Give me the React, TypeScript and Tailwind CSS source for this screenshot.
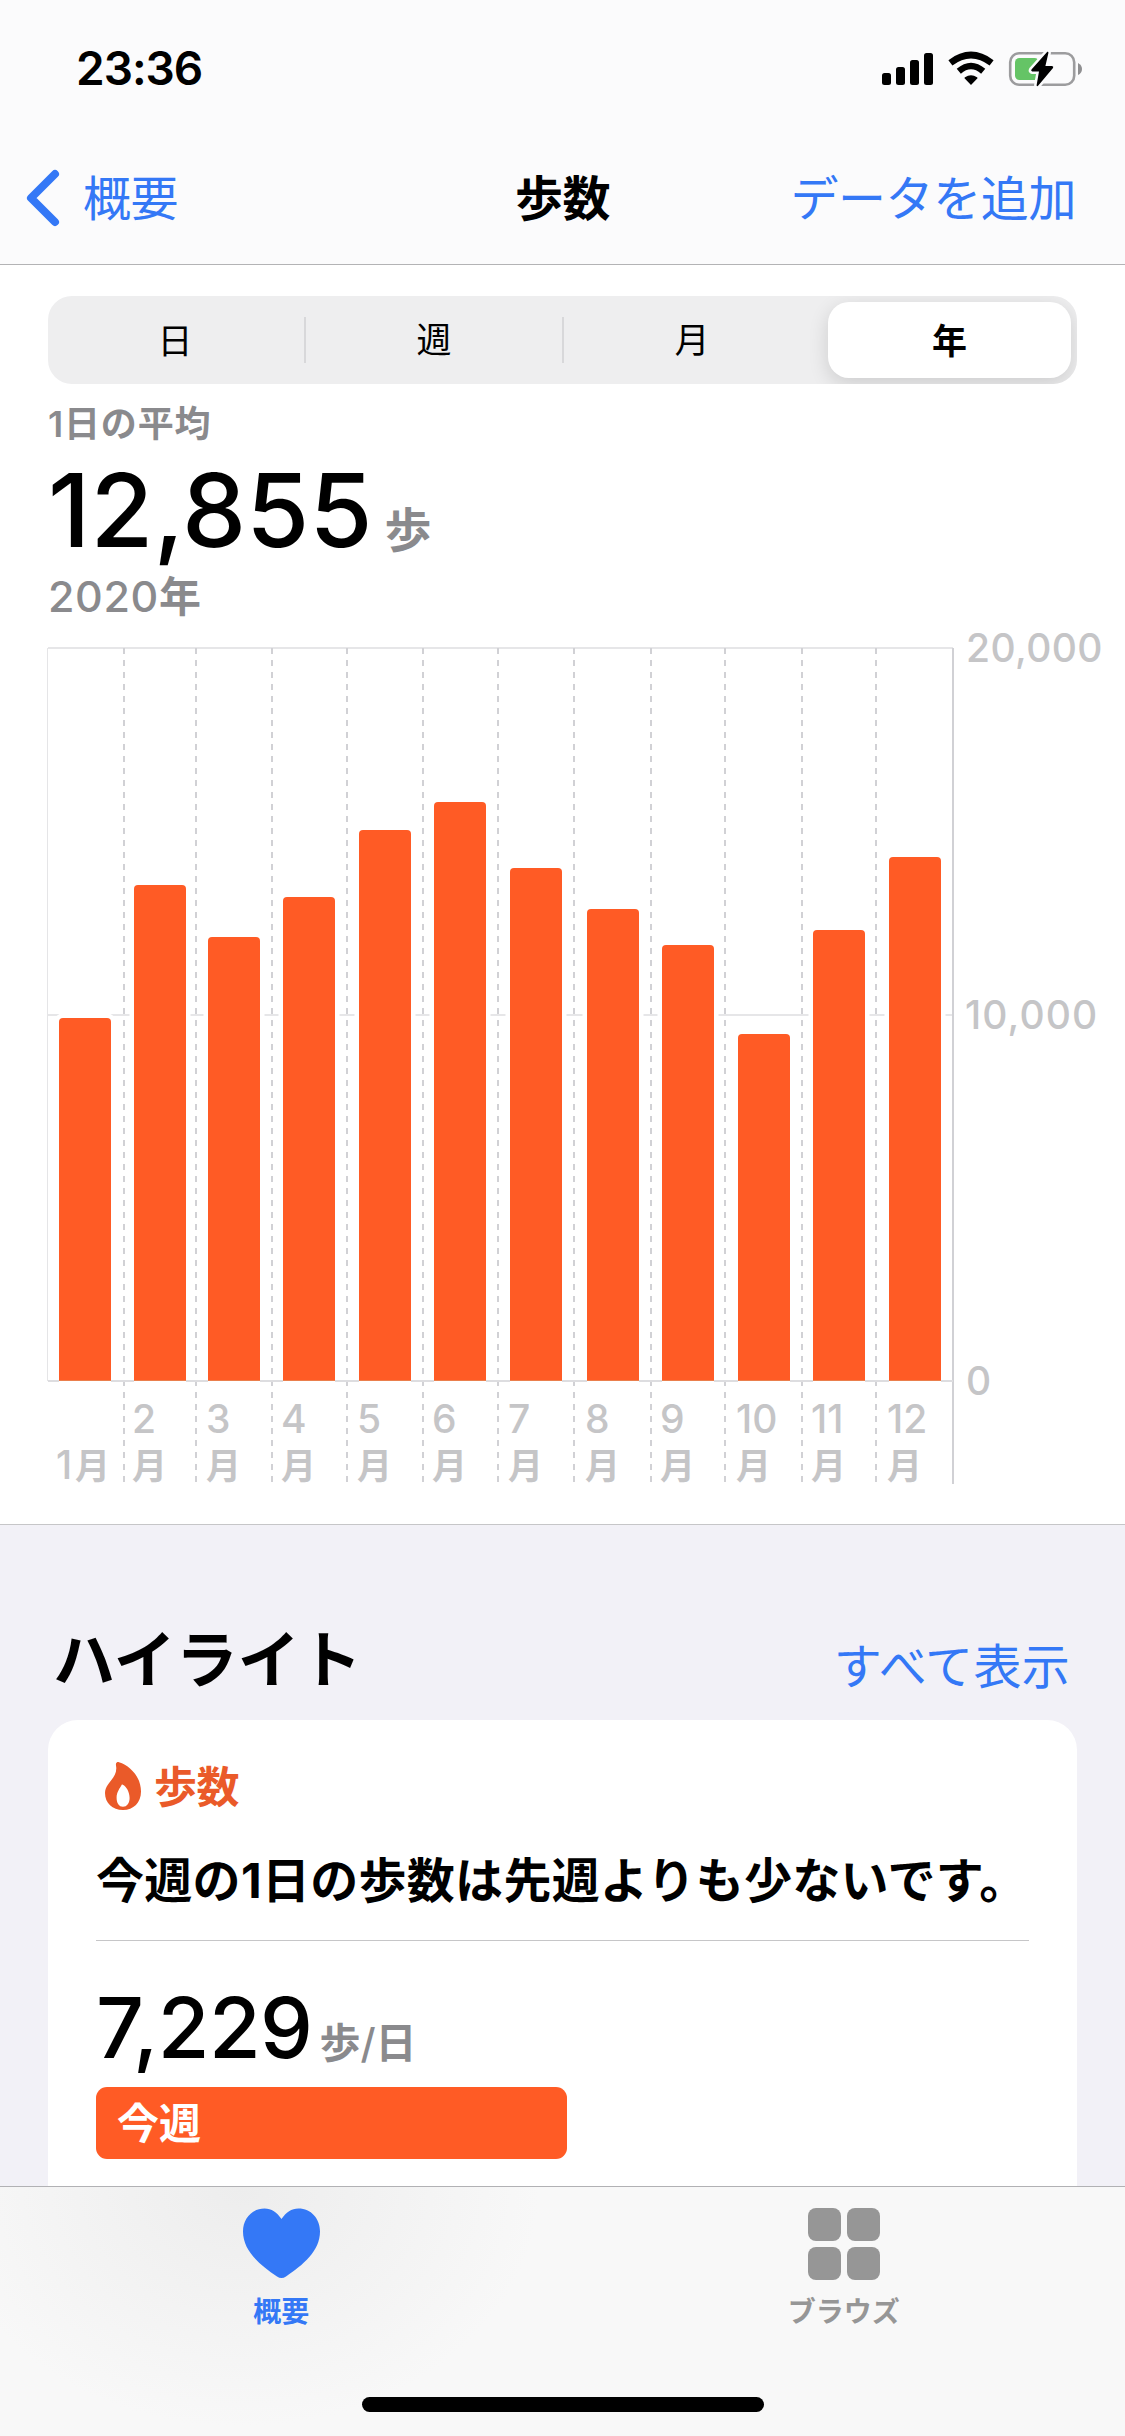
const months = [
  { label: "1", x: 59, top: 1018 },
  { label: "2", x: 134, top: 885 },
  { label: "3", x: 208, top: 937 },
  { label: "4", x: 283, top: 897 },
  { label: "5", x: 359, top: 830 },
  { label: "6", x: 434, top: 802 },
  { label: "7", x: 510, top: 868 },
  { label: "8", x: 587, top: 909 },
  { label: "9", x: 662, top: 945 },
  { label: "10", x: 738, top: 1034 },
  { label: "11", x: 813, top: 930 },
  { label: "12", x: 889, top: 857 },
];

const gridLines = [124, 196, 272, 347, 423, 498, 574, 651, 725, 802, 876];

function StatusIcons() {
  return (
    <svg width="201" height="36" viewBox="881 51 201 36">
      <rect x="882" y="73" width="9" height="12" rx="2.5" />
      <rect x="896" y="67" width="9" height="18" rx="2.5" />
      <rect x="910" y="60" width="9" height="25" rx="2.5" />
      <rect x="924" y="53" width="9" height="32" rx="2.5" />
      <path d="M971 85 L964.5 78.3 Q964.3 77.6 965 77.2 Q971 73.2 977 77.2 Q977.7 77.6 977.5 78.3 Z" />
      <path d="M958.8 71.2 Q971 60.8 983.2 71.2" fill="none" stroke="#000" strokeWidth="6.4" />
      <path d="M950.4 62.8 Q971 47.2 991.6 62.8" fill="none" stroke="#000" strokeWidth="6.6" />
      <rect x="1010.2" y="53.2" width="64" height="31.6" rx="9" fill="none" stroke="#9c9c9e" strokeWidth="2.6" />
      <path d="M1078 63 Q1082 65 1082 69 Q1082 73 1078 75 Z" fill="#8f8f91" />
      <rect x="1015" y="58" width="24" height="22" rx="4.5" fill="#65c466" />
      <path
        d="M1047.3 51.8 L1031.5 69.5 Q1030.5 71.2 1032.3 71.5 L1039 71.5 L1036.6 85.2 Q1036.8 87 1038.3 85.6 L1053 68 Q1054 66.3 1052 66 L1045.4 66 L1048.4 53 Q1048.5 51.2 1047.3 51.8 Z"
        stroke="#fbfbfc"
        strokeWidth="5"
        paintOrder="stroke"
      />
    </svg>
  );
}

function Chart() {
  return (
    <svg className="block" width="1125" height="902" viewBox="0 622 1125 902" fontSize="39" fontWeight="500">
      <path d="M47.5 648V1381" stroke="#e5e5e7" />
      <path d="M48 648H953M48 1015H953M48 1381H953" stroke="#e6e6e8" strokeWidth="2" />
      {gridLines.map((x) => (
        <path key={x} d={`M${x} 648V1482`} stroke="#d1d1d5" strokeWidth="2" strokeDasharray="6 6" />
      ))}
      <path d="M953 648V1484" stroke="#d1d1d5" strokeWidth="2" />
      {months.map((m) => (
        <g key={m.label}>
          <path
            d={`M${m.x} 1380V${m.top + 4}q0-4 4-4h44q4 0 4 4V1380Z`}
            fill="#ff5b25"
            stroke="#fff"
            strokeWidth="9"
            paintOrder="stroke"
          />
          <path d={`M${m.x} 1380.500h52`} stroke="#ea7f4d" />
        </g>
      ))}
      <path
        d="M48 1381H59M111 1381H134M186 1381H208M260 1381H283M335 1381H359M411 1381H434M486 1381H510M562 1381H587M639 1381H662M714 1381H738M790 1381H813M865 1381H889M941 1381H953"
        stroke="#dddde0"
        strokeWidth="2"
      />
      <g fill="#c5c5c7">
        <text x="966" y="662" letterSpacing="0.4">20,000</text>
        <text x="965" y="1029" letterSpacing="1.1">10,000</text>
        <text x="966" y="1395">0</text>
        {months.map((m, i) =>
          i === 0 ? (
            <text key={m.label} x="56" y="1479">
              1<tspan x="75" fontSize="35" fontWeight="700">月</tspan>
            </text>
          ) : (
            <g key={m.label}>
              <text x={m.x - 2} y="1433">{m.label}</text>
              <text x={m.x - 2} y="1479" fontSize="35" fontWeight="700">月</text>
            </g>
          )
        )}
      </g>
    </svg>
  );
}

function Flame() {
  return (
    <svg width="36" height="48" viewBox="0 0 36 48">
      <path
        fillRule="evenodd"
        fill="#ea5a29"
        d="M11 1.6C11.3.4 12.6-.2 14 .2C25 3.500 36 15 36 29.500C36 40.500 28.500 48 18 48C7.500 48 0 41 0 31C0 21 11.500 17 11.300 6C11.200 4 10.700 2.800 11 1.600ZM16.600 23C15 26 11.600 30 11.600 36C11.600 41 14 44.800 18 44.800C22 44.800 24.600 41 24.600 36C24.600 30 21.500 24.500 17.800 22.700C17.300 22.500 16.900 22.500 16.600 23Z"
      />
    </svg>
  );
}

export default function App() {
  return (
    <div className="flex h-[2436px] w-[1125px] flex-col overflow-hidden bg-[#f2f1f7] font-['Inter','Noto_Sans_CJK_JP',sans-serif] text-black">
      <header className="h-[265px] shrink-0 border-b border-[#b3b3b5] bg-[#fbfbfc]">
        <div className="flex h-[137px] items-center justify-between pr-[43px] pl-[76px]">
          <span className="text-[46px] font-semibold tracking-[-1px]">23:36</span>
          <StatusIcons />
        </div>
        <div className="grid h-[122px] grid-cols-3 items-center pr-[49px] pl-[25px] text-[48px] tracking-[-0.6px] text-[#3478f6]">
          <div className="flex items-center">
            <svg width="35" height="58" viewBox="0 0 35 58" fill="none">
              <path d="M30 5L6 29L30 53" stroke="#3478f6" strokeWidth="8" strokeLinecap="round" strokeLinejoin="round" />
            </svg>
            <span className="ml-[23px] pt-[2px]">概要</span>
          </div>
          <h1 className="pt-[2px] pl-[24px] text-center font-bold text-black">歩数</h1>
          <span className="pt-[2px] text-right tracking-[-0.4px] whitespace-nowrap">データを追加</span>
        </div>
      </header>

      <main className="min-h-0 flex-1 overflow-hidden">
        <section className="border-b border-[#c6c6c8] bg-white">
          <div className="px-12 pt-[31px]">
            <div className="grid h-[88px] grid-cols-[256px_258px_258px_1fr] items-center overflow-hidden rounded-[24px] bg-[#eeeeef] text-center text-[35px]">
              <span className="pt-[2px] pr-[2px]">日</span>
              <span className="border-l-2 border-[#d8d8da] leading-[46px]">週</span>
              <span className="border-l-2 border-[#d8d8da] leading-[46px]">月</span>
              <span className="mr-[6px] ml-[8px] rounded-[21px] bg-white pt-[2px] leading-[74px] font-bold shadow-[0_6px_20px_rgba(0,0,0,0.14)]">
                年
              </span>
            </div>
            <p className="mt-4 text-[36px] leading-[49px] font-bold tracking-[0.8px] text-[#8a8a8d]">
              <span className="font-semibold">1</span>日の平均
            </p>
            <p className="h-[122px] text-[102px] leading-[122px] font-medium tracking-[0.1px]">
              12,855
              <span className="ml-[12px] text-[47px] leading-none font-bold text-[#8a8a8d]">歩</span>
            </p>
            <p className="text-[43px] leading-[51px] font-medium tracking-[0.6px] text-[#8a8a8d]">
              2020<span className="text-[42px] font-bold">年</span>
            </p>
          </div>
          <Chart />
        </section>

        <section className="px-12 pt-24">
          <div className="flex items-end justify-between pr-[7px] pl-[5px]">
            <h2 className="text-[62px] leading-[80px] font-bold">ハイライト</h2>
            <span className="text-[48px] leading-[68px] tracking-[0.3px] text-[#3478f6]">すべて表示</span>
          </div>
          <div className="mt-[19px] h-[600px] rounded-[30px] bg-white px-12">
            <div className="flex h-[132px] items-center gap-[13px] pl-[9px] text-[43px] font-bold tracking-[-0.6px] text-[#ea5a29]">
              <Flame />
              <span className="pt-[2px]">歩数</span>
            </div>
            <p className="text-[48px] leading-[58px] font-bold tracking-[0.3px] whitespace-nowrap">
              今週の1日の歩数は先週よりも少ないです。
            </p>
            <hr className="mt-[30px] border-[#c6c6c8]" />
            <p className="mt-[27px] h-[119px] text-[84px] leading-[119px] font-medium tracking-[-0.6px]">
              7,229
              <span className="ml-[7px] text-[41px] leading-none font-bold tracking-normal text-[#8a8a8d]">
                歩<span className="font-medium">/</span>日
              </span>
            </p>
            <div className="h-[72px] w-[471px] rounded-[11px] bg-[#ff5b25] pl-[21px] text-[42px] leading-[73px] font-bold text-white">
              今週
            </div>
          </div>
        </section>
      </main>

      <nav className="h-[250px] shrink-0 border-t border-[#b1b1b4] bg-[#f9f9f9] bg-[radial-gradient(ellipse_300px_240px_at_240px_0px,#ededed,#f8f8f8)] pt-[21px]">
        <div className="grid grid-cols-2 text-[28px] font-bold">
          <div className="flex flex-col items-center">
            <svg width="77" height="73" viewBox="0 0 77 73">
              <path
                fill="#3478f6"
                d="M38.500 11C34 4.500 28.500.500 21.500.500C9 .500 0 10.500 0 23.500C0 43 17 57 34 68.500C37 70.600 40 70.600 43 68.500C60 57 77 43 77 23.500C77 10.500 68 .500 55.500.500C48.500.500 43 4.500 38.500 11Z"
              />
            </svg>
            <span className="mt-[7px] leading-[48px] text-[#3478f6]">概要</span>
          </div>
          <div className="flex flex-col items-center">
            <div className="grid h-[73px] grid-cols-2 content-start gap-[6px]">
              <span className="size-[33px] rounded-[8px] bg-[#969696]" />
              <span className="size-[33px] rounded-[8px] bg-[#969696]" />
              <span className="size-[33px] rounded-[8px] bg-[#969696]" />
              <span className="size-[33px] rounded-[8px] bg-[#969696]" />
            </div>
            <span className="mt-[7px] leading-[48px] text-[#969696]">ブラウズ</span>
          </div>
        </div>
        <div className="mx-auto mt-[61px] h-[15px] w-[402px] rounded-full bg-black" />
      </nav>
    </div>
  );
}
